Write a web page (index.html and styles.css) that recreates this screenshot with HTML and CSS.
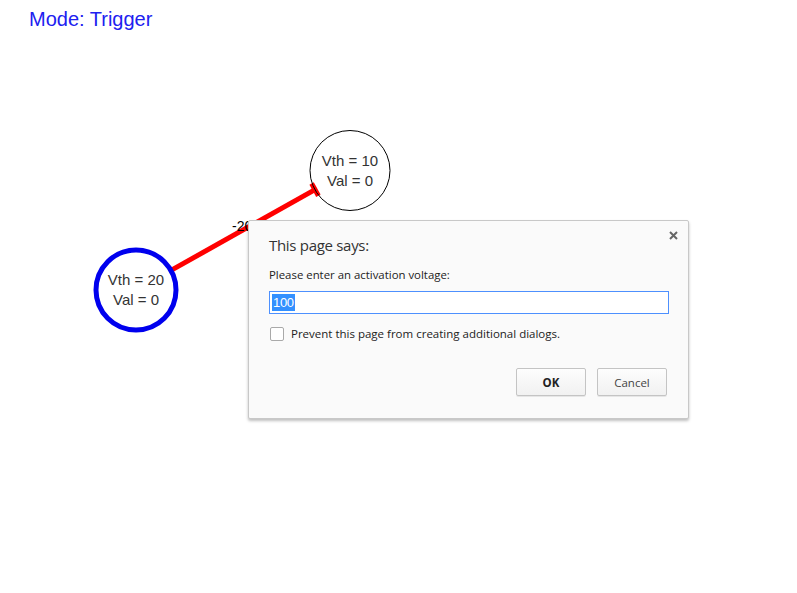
FILE: index.html
```html
<!DOCTYPE html>
<html>
<head>
<meta charset="utf-8">
<link rel="stylesheet" href="styles.css">
</head>
<body>
<div class="stage">
  <div class="mode">Mode: Trigger</div>
  <svg class="canvas" width="797" height="593" viewBox="0 0 797 593">
    <line class="edge" x1="171" y1="270.4" x2="315" y2="189.6"/>
    <line class="edge" x1="311.6" y1="183.5" x2="318.4" y2="195.7"/>
    <text class="edge-label" x="232" y="231">-20</text>
    <circle class="node" cx="350" cy="170.5" r="40"/>
    <text class="node-text" x="350" y="166">Vth = 10</text>
    <text class="node-text" x="350" y="186">Val = 0</text>
    <circle class="node node-active" cx="136" cy="290" r="40"/>
    <text class="node-text" x="136" y="285">Vth = 20</text>
    <text class="node-text" x="136" y="305">Val = 0</text>
  </svg>
  <div class="dialog">
    <div class="close">
      <svg width="9" height="9" viewBox="0 0 9 9"><path d="M1 1 L8 8 M8 1 L1 8" stroke="#666" stroke-width="2"/></svg>
    </div>
    <div class="title">This page says:</div>
    <div class="message">Please enter an activation voltage:</div>
    <div class="input"><span class="sel">100</span></div>
    <div class="check-row">
      <span class="checkbox"></span>
      <span class="check-label">Prevent this page from creating additional dialogs.</span>
    </div>
    <div class="buttons">
      <div class="btn btn-ok">OK</div>
      <div class="btn">Cancel</div>
    </div>
  </div>
</div>
</body>
</html>
```
FILE: styles.css
```css
html, body {
  margin: 0;
  padding: 0;
  background: #fff;
}
.stage {
  position: relative;
  width: 797px;
  height: 593px;
  overflow: hidden;
}
.mode {
  padding: 7px 0 0 29px;
  font-family: "Liberation Sans", Arial, sans-serif;
  font-size: 20px;
  line-height: 24px;
  color: #2020f0;
}
.canvas {
  position: absolute;
  left: 0;
  top: 0;
}
.edge {
  stroke: #ff0000;
  stroke-width: 5;
}
.edge-label {
  font-family: "Liberation Sans", Arial, sans-serif;
  font-size: 14px;
  fill: #000;
}
.node {
  fill: none;
  stroke: #000;
  stroke-width: 1;
}
.node-active {
  stroke: #0000ee;
  stroke-width: 5;
}
.node-text {
  font-family: "Liberation Sans", Arial, sans-serif;
  font-size: 15px;
  fill: #333;
  text-anchor: middle;
}
.dialog {
  position: absolute;
  left: 248px;
  top: 220px;
  width: 399px;
  height: 175px;
  padding: 0 20px 22px 20px;
  background: #fafafa;
  border: 1px solid #c8c8c8;
  border-radius: 2px;
  box-shadow: 0 2px 3px rgba(0,0,0,0.25);
  font-family: "Open Sans", "Noto Sans", sans-serif;
  color: #333;
  display: flex;
  flex-direction: column;
}
.close {
  position: absolute;
  right: 10px;
  top: 10px;
  width: 9px;
  height: 9px;
  line-height: 0;
}
.title {
  margin-top: 14px;
  font-size: 15px;
  line-height: 20px;
  letter-spacing: -0.3px;
  color: #333;
}
.message {
  margin-top: 12px;
  font-size: 11.4px;
  line-height: 16px;
  color: #222;
}
.input {
  margin-top: 8px;
  width: 396px;
  height: 21px;
  border: 1px solid #4d90fe;
  background: #fff;
  display: flex;
  align-items: center;
  padding-left: 2px;
  font-family: "Liberation Sans", Arial, sans-serif;
  font-size: 13px;
}
.sel {
  background: #3390ff;
  color: #fff;
  line-height: 17px;
  padding: 0 1px;
  letter-spacing: -0.3px;
}
.check-row {
  margin-top: 12px;
  display: flex;
  align-items: center;
  gap: 7px;
  padding-left: 1px;
}
.checkbox {
  width: 12px;
  height: 12px;
  border: 1px solid #a9a9a9;
  border-radius: 2px;
  background: #fff;
}
.check-label {
  font-size: 11.5px;
  line-height: 16px;
  color: #222;
}
.buttons {
  margin-top: auto;
  display: flex;
  justify-content: flex-end;
  gap: 11px;
  padding-right: 1px;
}
.btn {
  width: 68px;
  height: 26px;
  border: 1px solid #c4c4c4;
  border-radius: 2px;
  background: linear-gradient(#fdfdfd, #f1f1f1);
  box-shadow: 0 1px 0 rgba(0,0,0,0.08);
  display: flex;
  align-items: center;
  justify-content: center;
  font-size: 11.5px;
  color: #444;
}
.btn-ok {
  font-weight: 700;
  color: #222;
}
```
